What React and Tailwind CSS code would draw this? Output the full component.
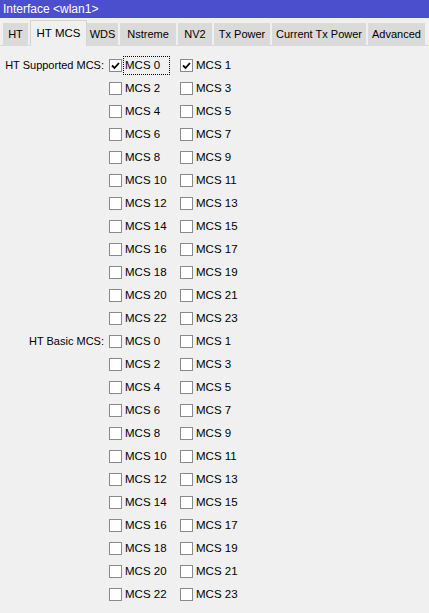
import React from "react";

const tabs = [
  { label: "HT", w: 27 },
  { label: "HT MCS", w: 57, active: true },
  { label: "WDS", w: 33 },
  { label: "Nstreme", w: 58 },
  { label: "NV2", w: 36 },
  { label: "Tx Power", w: 58 },
  { label: "Current Tx Power", w: 96 },
  { label: "Advanced", w: 59 },
];

function Box({ checked }) {
  return (
    <span className="w-[13px] h-[13px] shrink-0 border border-[#8a8a8a] bg-white flex items-center justify-center">
      {checked && (
        <svg width="9" height="8" viewBox="0 0 9 8">
          <path d="M1 3.5 L3.5 6 L8 1" stroke="#000" strokeWidth="1.8" fill="none" />
        </svg>
      )}
    </span>
  );
}

function Item({ n, checked, focus }) {
  return (
    <div className="w-[71px] flex items-center">
      <Box checked={checked} />
      <span
        className={
          "ml-[1px] pl-[1px] leading-[17px] text-[11.5px] " +
          (focus ? "pr-[9px] border border-dotted border-black" : "pr-[1px] border border-transparent")
        }
      >
        MCS {n}
      </span>
    </div>
  );
}

function Group({ label, checkedSet }) {
  const rows = [];
  for (let i = 0; i < 12; i++) {
    const a = i * 2;
    const b = a + 1;
    rows.push(
      <div key={i} className="h-[23px] flex items-center">
        <div className="w-[109px] text-right pr-[5px] shrink-0 text-[11px]">{i === 0 ? label : ""}</div>
        <Item n={a} checked={checkedSet.includes(a)} focus={checkedSet.length > 0 && a === 0} />
        <Item n={b} checked={checkedSet.includes(b)} />
      </div>
    );
  }
  return <div>{rows}</div>;
}

export default function App() {
  return (
    <div
      className="w-[429px] h-[613px] bg-[#f0f0f0] text-[11px] text-black overflow-hidden"
      style={{ fontFamily: '"Liberation Sans", Arial, sans-serif' }}
    >
      <div className="h-[18px] bg-[#4b4fcd] text-white pl-[3px] leading-[18px] text-[12px]">Interface &lt;wlan1&gt;</div>
      <div className="h-[28px] flex items-end pl-[3px] border-b border-[#dadada]">
        {tabs.map((t) =>
          t.active ? (
            <div
              key={t.label}
              style={{ width: t.w }}
              className="h-[26px] bg-[#f0f0f0] border border-b-0 border-[#d4d4d4] flex items-center justify-center text-[11.5px] mb-[-1px] shrink-0"
            >
              {t.label}
            </div>
          ) : (
            <div
              key={t.label}
              style={{ width: t.w }}
              className="h-[22px] bg-[#dadada] border-r-2 border-[#f0f0f0] flex items-center justify-center shrink-0 text-[11px] whitespace-nowrap"
            >
              {t.label}
            </div>
          )
        )}
      </div>
      <div className="pt-[8px]">
        <Group label="HT Supported MCS:" checkedSet={[0, 1]} />
        <Group label="HT Basic MCS:" checkedSet={[]} />
      </div>
    </div>
  );
}
